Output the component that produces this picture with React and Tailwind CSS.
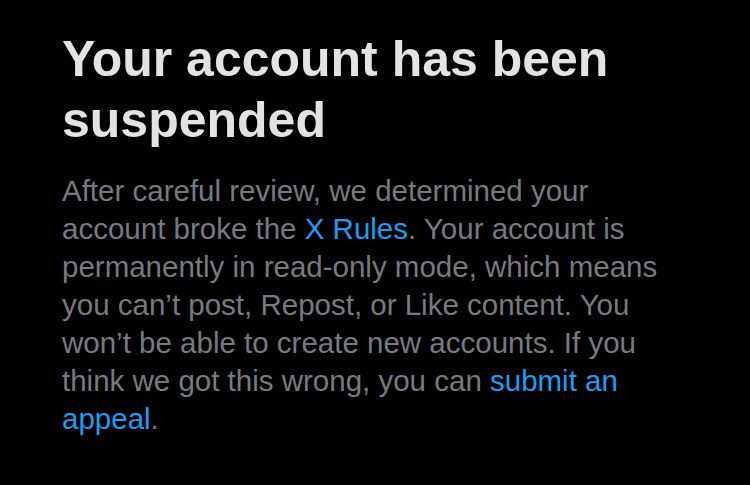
export default function App() {
  return (
    <div className="w-[750px] h-[485px] bg-black overflow-hidden" style={{fontFamily: '"Liberation Sans", Arial, sans-serif'}}>
      <div className="pl-[62px] pr-[20px] pt-[29px]">
        <h1 className="text-[50px] leading-[61px] font-bold text-[#e2e3e4]">
          Your account has been<br />suspended
        </h1>
        <p className="mt-[21px] text-[29.5px] leading-[38px] text-[#767a7f]">
          After careful review, we determined your<br />
          account broke the <span className="text-[#1d9bf0]">X Rules</span>. Your account is<br />
          permanently in read-only mode, which means<br />
          you can’t post, Repost, or Like content. You<br />
          won’t be able to create new accounts. If you<br />
          think we got this wrong, you can <span className="text-[#1d9bf0]">submit an<br />appeal</span>.
        </p>
      </div>
    </div>
  );
}
